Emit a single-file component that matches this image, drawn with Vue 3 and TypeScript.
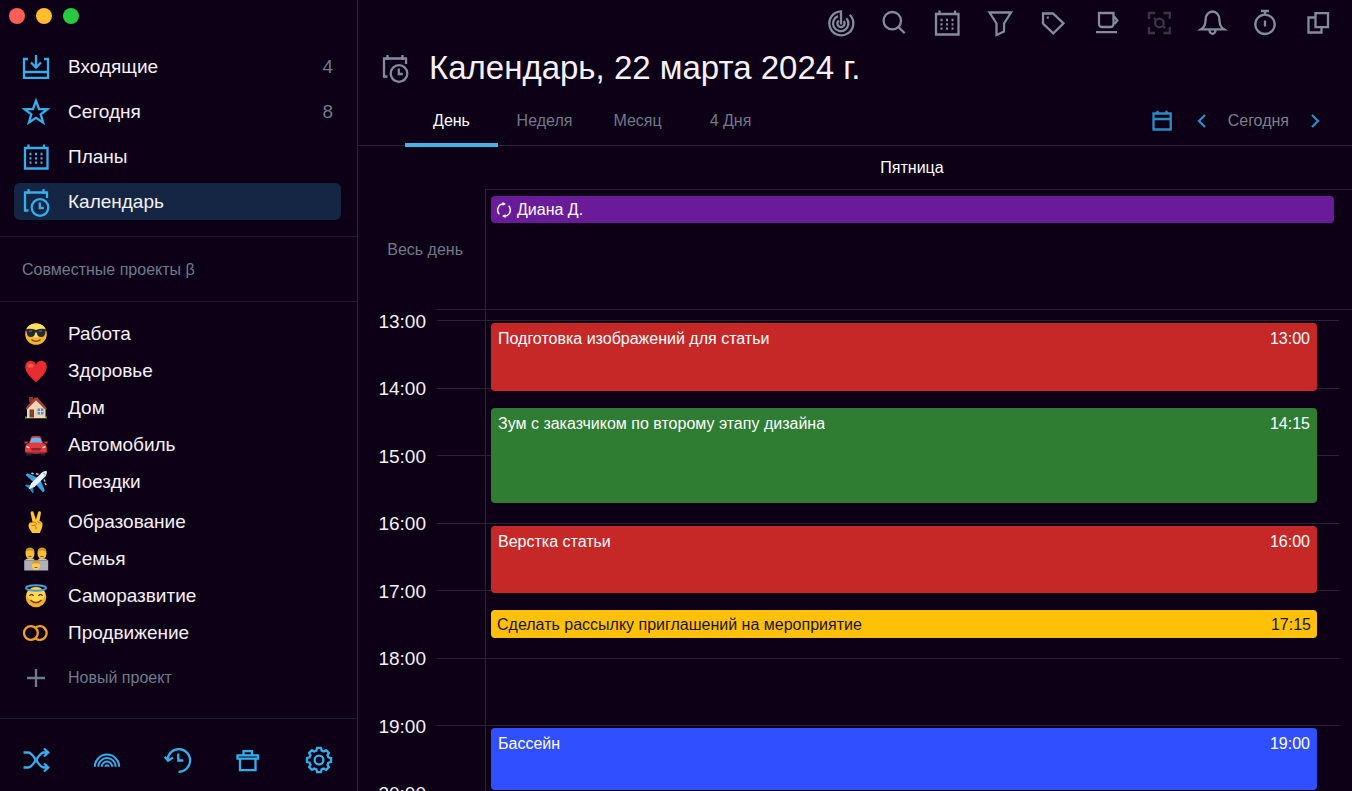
<script setup lang="ts">
import { ref } from 'vue'

interface Stroke { d: string; w?: number }
interface NavItem { id: string; label: string; icon: string; count?: number }
interface CalendarEvent { title: string; start: string; end: string; tone: string }

const gearPath = (() => {
  const points: string[] = []
  const teeth = 8
  for (let i = 0; i < teeth; i++) {
    const base = (i / teeth) * Math.PI * 2 - Math.PI / 2
    const ring: [number, number][] = [[-0.27, 9.8], [-0.16, 12.2], [0.16, 12.2], [0.27, 9.8]]
    for (const [offset, radius] of ring) {
      const x = 14 + Math.cos(base + offset) * radius
      const y = 14 + Math.sin(base + offset) * radius
      points.push(`${x.toFixed(2)} ${y.toFixed(2)}`)
    }
  }
  return `M${points.join('L')}Z`
})()

const dots = 'M7.5 11h2M13 11h2M18.5 11h2M7.5 15.3h2M13 15.3h2M18.5 15.3h2M7.5 19.6h2M13 19.6h2M18.5 19.6h2'

const icons: Record<string, Stroke[]> = {
  inbox: [{ d: 'M6 6H2v18.8h24V6h-4M2 19h24M14 2v12M9 9.5l5 5 5-5' }],
  star: [{ d: 'M14 2.8l3 8.2 8.4.2-6.7 5.2 2.4 8.1L14 19.8l-7.1 4.7 2.4-8.1-6.7-5.2L11 11z' }],
  plans: [{ d: 'M3 5h22.5v20.5H3zM6.5 1.500V5M22 1.500V5' }, { d: dots }],
  calendar: [{ d: 'M6.500 22.500H3V4.500h22V10M6.500 1v5M21.500 1v5M26.300 19.500a8.300 8.300 0 1 1-16.600 0a8.300 8.300 0 1 1 16.600 0M17.800 14.500v5.500h4' }],
  target: [{ d: 'M22.800 5.800A12 12 0 1 1 14 2.300V14M19.400 9.200A7.700 7.700 0 1 1 11 7.200M16.600 12A3.600 3.600 0 1 1 11.800 11.600M14 13v2.500' }],
  search: [{ d: 'M21 11.700a8.700 8.700 0 1 1-17.400 0a8.700 8.700 0 1 1 17.400 0M18.500 18l6.200 6.200' }],
  filter: [{ d: 'M3.500 3.500H25L18 14.500v8L10.500 26V14.500z' }],
  tag: [{ d: 'M4 4.500h10l10.500 9.800L14.300 24.300 4 14.500zM7.800 8.700h2' }],
  cup: [{ d: 'M7 4h14.500v11a3 3 0 0 1-3 3H10a3 3 0 0 1-3-3zM21.500 8.500h1.500l2.300 3-2.800 3.500M4 23.200h21' }],
  focus: [{ d: 'M4 10V4h6M18.500 4h6.300v6M24.800 18v6h-6.300M10 24H4v-6M18.700 14a4.300 4.300 0 1 1-8.600 0a4.300 4.300 0 1 1 8.600 0M9 9l2 2M18 17l2 2' }],
  bell: [{ d: 'M3 20.300h23c-4.200-2.600-4.300-6-4.700-10.300a6.800 7.500 0 0 0-13.600 0c-.400 4.300-.5 7.700-4.700 10.300zM11.500 20.300v1a3 3.500 0 0 0 6 0v-1' }],
  timer: [{ d: 'M23.700 15.300a9.700 9.700 0 1 1-19.400 0a9.700 9.700 0 1 1 19.400 0M10 2h8M14 2v4M14 11.500v6' }],
  windows: [{ d: 'M11.500 4.200h12.500v14H11.500zM11.500 8.500H4.500v15h13v-5' }],
  shuffle: [{ d: 'M1.500 6.500H6c3.500 0 5 3.500 8 7.500s4.500 7.500 8 7.500h4M1.500 21.500H6c3.500 0 5-3.500 8-7.500s4.500-7.500 8-7.500h4M22 2.500l4.300 4-4.300 4M22 17.500l4.300 4-4.300 4' }],
  rainbow: [{ d: 'M1.800 20.800a12.200 12.200 0 0 1 24.400 0M5.300 20.800a8.700 8.700 0 0 1 17.400 0M8.800 20.800a5.200 5.200 0 0 1 10.400 0M12.500 20.800a1.500 1.500 0 0 1 3 0', w: 2 }],
  history: [{ d: 'M3.500 14A11.300 11.300 0 1 1 14.500 25.800M.8 10.800l3.200 4 5-3.200M14.300 7.500v7h5' }],
  trash: [{ d: 'M3.500 9.300h20.500v3.400H3.500zM9.500 9.300V5.200h8.500v4.100M6 12.700h15.500v11.500H6z' }],
  gear: [{ d: gearPath }, { d: 'M18.400 14a4.400 4.400 0 1 1-8.800 0a4.400 4.400 0 1 1 8.800 0' }],
  rings: [{ d: 'M15.800 14a6.900 6.900 0 1 1-13.800 0a6.900 6.900 0 1 1 13.800 0M13.700 8.400A6.900 6.900 0 1 1 13.700 19.600' }],
  plus: [{ d: 'M14 5v18M5 14h18' }],
  date: [{ d: 'M5.500 6.500h17.200v16H5.500zM5.500 12h17.200M9.500 6V3.700M18.500 6V3.700' }],
  prev: [{ d: 'M17 8l-6 6 6 6' }],
  next: [{ d: 'M11 8l6 6-6 6' }],
}

const nav: NavItem[] = [
  { id: 'inbox', label: 'Входящие', icon: 'inbox', count: 4 },
  { id: 'today', label: 'Сегодня', icon: 'star', count: 8 },
  { id: 'plans', label: 'Планы', icon: 'plans' },
  { id: 'calendar', label: 'Календарь', icon: 'calendar' },
]

const projectGroups: { label: string; art: string }[][] = [
  [
    { label: 'Работа', art: 'cool' },
    { label: 'Здоровье', art: 'heart' },
    { label: 'Дом', art: 'house' },
    { label: 'Автомобиль', art: 'car' },
    { label: 'Поездки', art: 'plane' },
  ],
  [
    { label: 'Образование', art: 'victory' },
    { label: 'Семья', art: 'family' },
    { label: 'Саморазвитие', art: 'angel' },
    { label: 'Продвижение', art: 'rings' },
  ],
]

const footer = [
  { icon: 'shuffle', label: 'Перемешать' },
  { icon: 'rainbow', label: 'Темы' },
  { icon: 'history', label: 'История' },
  { icon: 'trash', label: 'Корзина' },
  { icon: 'gear', label: 'Настройки' },
]

const tools = [
  { icon: 'target', label: 'Цели' },
  { icon: 'search', label: 'Поиск' },
  { icon: 'plans', label: 'Планы' },
  { icon: 'filter', label: 'Фильтр' },
  { icon: 'tag', label: 'Метки' },
  { icon: 'cup', label: 'Перерыв' },
  { icon: 'focus', label: 'Фокус' },
  { icon: 'bell', label: 'Уведомления' },
  { icon: 'timer', label: 'Таймер' },
  { icon: 'windows', label: 'Окна' },
]

const tabs = ['День', 'Неделя', 'Месяц', '4 Дня']
const activeTab = ref('День')
const activeNav = ref('calendar')

const hours = ['13:00', '14:00', '15:00', '16:00', '17:00', '18:00', '19:00', '20:00']

const events: CalendarEvent[] = [
  { title: 'Подготовка изображений для статьи', start: '13:00', end: '14:00', tone: 'red' },
  { title: 'Зум с заказчиком по второму этапу дизайна', start: '14:15', end: '15:40', tone: 'green' },
  { title: 'Верстка статьи', start: '16:00', end: '17:00', tone: 'red' },
  { title: 'Сделать рассылку приглашений на мероприятие', start: '17:15', end: '17:40', tone: 'yellow' },
  { title: 'Бассейн', start: '19:00', end: '19:55', tone: 'blue' },
]

// The time grid starts at 12:50 and has one row for every five minutes.
const GRID_START = 12 * 60 + 50
function row(time: string): number {
  const [h, m] = time.split(':').map(Number)
  return (h * 60 + m - GRID_START) / 5 + 1
}
</script>

<template>
  <div class="app">
    <aside class="sidebar">
      <div class="lights">
        <button class="light close" aria-label="Закрыть"></button>
        <button class="light minimize" aria-label="Свернуть"></button>
        <button class="light expand" aria-label="Развернуть"></button>
      </div>

      <nav class="nav">
        <button
          v-for="item in nav"
          :key="item.id"
          class="nav-item"
          :class="{ active: activeNav === item.id }"
          @click="activeNav = item.id"
        >
          <svg class="icon" viewBox="0 0 28 28" aria-hidden="true">
            <path v-for="(s, i) in icons[item.icon]" :key="i" :d="s.d" />
          </svg>
          <span class="nav-label">{{ item.label }}</span>
          <span v-if="item.count" class="count">{{ item.count }}</span>
        </button>
      </nav>

      <h2 class="shared">Совместные проекты β</h2>

      <div class="projects">
        <ul v-for="(group, g) in projectGroups" :key="g" class="group">
          <li v-for="p in group" :key="p.label">
            <button class="project">
              <svg v-if="p.art === 'rings'" class="icon orange" viewBox="0 0 28 28" aria-hidden="true">
                <path :d="icons.rings[0].d" />
              </svg>
              <svg v-else class="emoji" viewBox="0 0 28 28" aria-hidden="true">
                <g v-if="p.art === 'cool'">
                  <circle cx="14" cy="14" r="10.800" fill="#f6b52b" />
                  <ellipse cx="14" cy="10.500" rx="9.500" ry="7" fill="#ffe05a" />
                  <path d="M3.500 9.500c3-1 7-.8 10.500.5 3.500-1.300 7.500-1.500 10.500-.5l-1 2c-.5 4.500-2 5.500-4.500 5.500-2.800 0-3.800-1.500-4.300-4.500h-1.400c-.5 3-1.500 4.500-4.300 4.500-2.500 0-4-1-4.500-5.500z" fill="#222a30" />
                  <path d="M7 11.200l3 0M17 11.200l3 0" stroke="#66757d" />
                  <path d="M9.500 19.500c2.500 2.500 6.500 2.500 9 0" stroke="#7a4312" stroke-width="1.400" fill="none" />
                </g>
                <g v-else-if="p.art === 'heart'">
                  <path d="M14 25.300C10 21.500 3.300 16 3.300 10c0-7 8-8.500 10.700-2.500C16.700 1.500 24.700 3 24.700 10c0 6-6.700 11.500-10.700 15.300z" fill="#e92c2f" />
                  <ellipse cx="8.700" cy="8.800" rx="3" ry="2" fill="#f8564f" />
                </g>
                <g v-else-if="p.art === 'house'">
                  <path d="M3 22.500h22v2H3z" fill="#5e8b3b" />
                  <path d="M5 13l8.500-8 10 9v10H5z" fill="#f1d3b5" />
                  <path d="M7 3h4v5H7z" fill="#7b3831" />
                  <path d="M3.300 14.500L12.500 3.500h3L25 14.500l-2 .8-9-9-8.800 9z" fill="#a63d35" />
                  <path d="M7.500 15.500h4.500v8H7.500z" fill="#76462f" />
                  <path d="M15.500 14.500h6v6h-6z" fill="#568bb5" />
                  <path d="M18.500 14.500v6M15.500 17.500h6" stroke="#c7dae5" />
                </g>
                <g v-else-if="p.art === 'car'">
                  <path d="M4.500 21h4.500v3.500H4.500zM19 21h4.500v3.500H19z" fill="#20252c" />
                  <path d="M7 12L9 6.500c.3-1 1-1.500 2-1.500h6c1 0 1.700.5 2 1.500l2 5.500z" fill="#cf343a" />
                  <path d="M7.800 12.500L9.700 7c3-.8 5.600-.8 8.600 0l1.900 5.500z" fill="#68b7ec" />
                  <path d="M5 13c3-2 15-2 18 0 1.700 1 2 3.500 1.800 8.500-7 1.500-14.600 1.500-21.600 0C3 16.500 3.300 14 5 13z" fill="#e33b3f" />
                  <path d="M2.500 11.500h3M22.500 11.500h3" stroke="#d63a3e" stroke-width="2" />
                  <path d="M8.500 17h11l-1.500 2.500h-8z" fill="#8c2430" />
                  <path d="M4.500 15.800l3 .8M23.500 15.800l-3 .8" stroke="#fff0c4" stroke-width="1.500" />
                  <path d="M5 21.500h18" stroke="#a52a35" stroke-width="1.500" />
                </g>
                <g v-else-if="p.art === 'plane'">
                  <path d="M16 10L5.500 5.200 3.500 7l8 7zM18.500 12l4.300 10.500-1.800 2-7-8z" fill="#3ca1df" />
                  <path d="M8 17l-4-.5-1 1.200 4.500 3 3 4.500 1.200-1-.5-4z" fill="#2488ca" />
                  <path d="M24.800 3.200c-2-.5-4.300.5-6 2.300L9 15.500 6.500 21.500l6-2.500L22.500 9.200c1.800-1.700 2.800-4 2.300-6z" fill="#e8eef3" />
                  <path d="M9.500 5l2 1M14 5.500l2.500 1M24 17l-1-2M23 13.500l-1-2" stroke="#b9d5e6" stroke-width="1.500" />
                  <path d="M21.500 5l1.800 1.800" stroke="#53748b" />
                </g>
                <g v-else-if="p.art === 'victory'">
                  <path d="M10.500 14L8.700 5.500c-.5-2.300 2.300-3 3-.8L14 11.500l2-7c.6-2.200 3.300-1.500 2.900.8L17.500 13c2.300.5 3.300 2 3 4-.3 4-1.800 5-2.500 8H10c-.5-2-3.500-4-3.500-7.500 0-2.300 1.500-3.500 4-3.500z" fill="#fbc43f" />
                  <path d="M8 15c3-1.500 6-1 6.500.5.500 2-3.500 2-5 2M12.500 17.500c1.500 1 1.700 2 1.500 3.500M15.500 13.500l3 2" stroke="#b87514" fill="none" />
                </g>
                <g v-else-if="p.art === 'family'">
                  <path d="M2.200 15.500h24v10h-24z" fill="#aeb0b7" />
                  <path d="M2.200 15.500l3-2h6l3 3 3-3h6l3 2z" fill="#c6c8ce" />
                  <ellipse cx="8" cy="8.500" rx="4.500" ry="5.500" fill="#f4bd3c" />
                  <ellipse cx="20" cy="8.500" rx="4.500" ry="5.500" fill="#f4bd3c" />
                  <path d="M3.500 7c0-6 9-6 9 0-3-2-6-2-9 0zM15.500 7c0-6 9-6 9 0-3-2-6-2-9 0z" fill="#d99622" />
                  <path d="M6.500 11.500h3M18.500 11.500h3" stroke="#8a5717" />
                  <ellipse cx="14" cy="20.500" rx="4" ry="4.500" fill="#ffcb50" />
                  <path d="M10 19c0-4.500 8-4.500 8 0-2.500-1-5.500-1-8 0z" fill="#d99622" />
                  <path d="M12.500 22.500h3" stroke="#8a5717" />
                </g>
                <g v-else>
                  <circle cx="14" cy="15" r="10.300" fill="#f5ae2b" />
                  <ellipse cx="14" cy="12.500" rx="9" ry="7" fill="#ffd953" />
                  <ellipse cx="14" cy="6" rx="10" ry="2.700" fill="none" stroke="#4b9fd4" stroke-width="2" />
                  <path d="M7.500 14c1-2 3-2 4 0M16.500 14c1-2 3-2 4 0M8.500 18c3 3.500 8 3.500 11 0" stroke="#704010" stroke-width="1.400" fill="none" />
                </g>
              </svg>
              <span>{{ p.label }}</span>
            </button>
          </li>
        </ul>
        <button class="project new">
          <svg class="icon muted" viewBox="0 0 28 28" aria-hidden="true"><path :d="icons.plus[0].d" /></svg>
          <span>Новый проект</span>
        </button>
      </div>

      <footer class="footer">
        <button v-for="f in footer" :key="f.icon" class="icon-button" :aria-label="f.label">
          <svg class="icon" viewBox="0 0 28 28" aria-hidden="true">
            <path v-for="(s, i) in icons[f.icon]" :key="i" :d="s.d" :stroke-width="s.w" />
          </svg>
        </button>
      </footer>
    </aside>

    <main class="main">
      <div class="toolbar">
        <button v-for="t in tools" :key="t.icon" class="icon-button" :aria-label="t.label" :disabled="t.icon === 'focus'">
          <svg class="icon grey" :class="{ dim: t.icon === 'focus' }" viewBox="0 0 28 28" aria-hidden="true">
            <path v-for="(s, i) in icons[t.icon]" :key="i" :d="s.d" />
          </svg>
        </button>
      </div>

      <header class="heading">
        <svg class="icon grey" viewBox="0 0 28 28" aria-hidden="true"><path :d="icons.calendar[0].d" /></svg>
        <h1>Календарь, 22 марта 2024 г.</h1>
      </header>

      <div class="bar">
        <div class="tabs" role="tablist">
          <button
            v-for="tab in tabs"
            :key="tab"
            class="tab"
            role="tab"
            :aria-selected="activeTab === tab"
            :class="{ active: activeTab === tab }"
            @click="activeTab = tab"
          >{{ tab }}</button>
        </div>
        <div class="pager">
          <button class="icon-button" aria-label="Выбрать дату">
            <svg class="icon blue" viewBox="0 0 28 28" aria-hidden="true"><path :d="icons.date[0].d" /></svg>
          </button>
          <button class="icon-button step" aria-label="Назад">
            <svg class="icon blue" viewBox="0 0 28 28" aria-hidden="true"><path :d="icons.prev[0].d" /></svg>
          </button>
          <button class="today">Сегодня</button>
          <button class="icon-button step" aria-label="Вперёд">
            <svg class="icon blue" viewBox="0 0 28 28" aria-hidden="true"><path :d="icons.next[0].d" /></svg>
          </button>
        </div>
      </div>

      <div class="day-head"><span>Пятница</span></div>

      <section class="all-day">
        <span class="all-day-label">Весь день</span>
        <div class="all-day-list">
          <div class="all-day-event">
            <svg class="repeat" viewBox="0 0 16 16" aria-hidden="true">
              <path d="M3.300 12.300A6.300 6.300 0 0 1 7.500 1.800M12.700 3.700A6.300 6.300 0 0 1 8.500 14.200" />
              <path class="tip" d="M6.500 0l3.500 1.900-3.500 1.900zM9.500 16L6 14.100l3.500-1.900z" />
            </svg>
            <span>Диана Д.</span>
          </div>
        </div>
      </section>

      <section class="timeline">
        <div class="time-grid">
          <div class="column-line"></div>
          <template v-for="h in hours" :key="h">
            <time class="hour" :style="{ gridRow: `${row(h) - 2} / span 4` }">{{ h }}</time>
            <div class="hour-line" :style="{ gridRow: `${row(h)} / span 1` }"></div>
          </template>
          <article
            v-for="e in events"
            :key="e.title"
            class="event"
            :class="e.tone"
            :style="{ gridRow: `${row(e.start)} / ${row(e.end)}` }"
          >
            <span class="event-title">{{ e.title }}</span>
            <time>{{ e.start }}</time>
          </article>
        </div>
      </section>
    </main>
  </div>
</template>

<style>
body {
  background: #0d0016;
}
</style>

<style scoped>
.app {
  display: grid;
  grid-template-columns: 358px 1fr;
  height: 100vh;
  overflow: hidden;
  box-sizing: border-box;
  background: #0d0016;
  color: #f6f0f8;
  font-family: "Liberation Sans", Arial, sans-serif;
  font-size: 16px;
  line-height: 20px;
}
.app *,
.app *::before {
  box-sizing: border-box;
}
button {
  margin: 0;
  padding: 0;
  border: 0;
  background: none;
  color: inherit;
  font: inherit;
  text-align: left;
}
h1,
h2,
ul {
  margin: 0;
  padding: 0;
  font-weight: 400;
  list-style: none;
}
.icon,
.emoji {
  display: block;
  flex: none;
  width: 28px;
  height: 28px;
  overflow: visible;
}
.icon {
  fill: none;
  stroke: #35aeec;
  stroke-width: 2.3;
}
.icon.grey {
  stroke: #858b9d;
}
.icon.dim {
  stroke: #3b3442;
}
.icon.muted {
  stroke: #6f7b8b;
}
.icon.orange {
  stroke: #f2a02c;
}
.icon.blue {
  stroke: #2b8cc4;
}

.sidebar {
  display: flex;
  flex-direction: column;
  min-height: 0;
  border-right: 1px solid #2a2135;
}
.lights {
  display: flex;
  flex: none;
  gap: 11px;
  height: 48px;
  padding: 8px 9px;
}
.light {
  width: 16px;
  height: 16px;
  border-radius: 50%;
}
.close {
  background: #ff5f57;
}
.minimize {
  background: #febc2e;
}
.expand {
  background: #28c840;
}
.nav {
  display: grid;
  gap: 8px;
  padding: 0 16px 16px 14px;
  border-bottom: 1px solid #211a2c;
}
.nav-item {
  display: flex;
  align-items: center;
  gap: 18px;
  height: 37px;
  padding: 0 8px;
  border-radius: 6px;
  font-size: 19px;
}
.nav-item.active {
  background: #142644;
}
.nav-label {
  flex: 1;
}
.count {
  color: #727888;
}
.shared {
  padding: 23px 22px 21px;
  border-bottom: 1px solid #211a2c;
  color: #6f7b8b;
  font-size: 16px;
  line-height: 20px;
}
.projects {
  display: flex;
  flex: 1;
  flex-direction: column;
  gap: 3px;
  padding: 13px 22px 0;
}
.project {
  display: flex;
  align-items: center;
  gap: 18px;
  width: 100%;
  height: 37px;
  font-size: 19px;
}
.project.new {
  height: 48px;
  color: #6f7b8b;
  font-size: 16px;
}
.footer {
  display: flex;
  justify-content: space-between;
  padding: 27px 24px 17px 22px;
  border-top: 1px solid #211a2c;
}

.main {
  display: flex;
  flex-direction: column;
  min-width: 0;
  min-height: 0;
}
.toolbar {
  display: flex;
  flex: none;
  align-items: center;
  justify-content: flex-end;
  gap: 25px;
  height: 45px;
  padding: 0 20px;
}
.heading {
  display: flex;
  flex: none;
  align-items: center;
  gap: 20px;
  height: 46px;
  padding-left: 23px;
}
h1 {
  font-size: 33px;
  line-height: 40px;
}
.bar {
  display: flex;
  flex: none;
  justify-content: space-between;
  height: 55px;
  padding: 5px 23px 0 47px;
  border-bottom: 1px solid #2a2135;
}
.tabs {
  display: grid;
  grid-auto-columns: 93px;
  grid-auto-flow: column;
  margin-bottom: -2px;
}
.tab {
  padding-top: 2px;
  border-bottom: 4px solid transparent;
  color: #727888;
  text-align: center;
}
.tab.active {
  border-color: #46b2e8;
  color: #fff;
}
.pager {
  display: flex;
  align-items: center;
}
.step {
  margin: 0 12px;
}
.step:last-child {
  margin-right: 0;
}
.today {
  color: #7f7d8d;
}

.day-head {
  display: flex;
  flex: none;
  height: 43px;
  padding: 0 13px 0 127px;
  color: #fff;
}
.day-head span {
  flex: 1;
  align-self: center;
  text-align: center;
}
.all-day {
  display: grid;
  flex: none;
  grid-template-columns: 127px 1fr;
  height: 120px;
}
.all-day-label {
  align-self: center;
  padding: 2px 22px 0 0;
  color: #727888;
  text-align: right;
}
.all-day-list {
  padding: 6px 18px 0 5px;
  border-top: 1px solid #2a2135;
  border-left: 1px solid #2a2135;
}
.all-day-event {
  display: flex;
  align-items: center;
  gap: 5px;
  height: 27px;
  padding: 0 5px;
  border-radius: 4px;
  background: #6a1b9a;
  color: #fff;
}
.repeat {
  width: 16px;
  height: 16px;
  fill: none;
  stroke: #fff;
  stroke-width: 1.5;
}
.repeat .tip {
  fill: #fff;
  stroke: none;
}
.timeline {
  flex: 1;
  min-height: 0;
  overflow: hidden;
}
.time-grid {
  display: grid;
  grid-template-columns: 79px 48px 1fr 13px;
  grid-template-rows: repeat(96, minmax(0, 1fr));
  height: 540px;
}
.time-grid::before {
  content: "";
  grid-row: 1;
  grid-column: 2 / -1;
  border-top: 1px solid #2a2135;
}
.column-line {
  grid-row: 1 / -1;
  grid-column: 3;
  border-left: 1px solid #2a2135;
}
.hour {
  grid-column: 1;
  align-self: center;
  padding: 3px 11px 0 0;
  font-size: 19px;
  text-align: right;
}
.hour-line {
  grid-column: 2 / 4;
  border-top: 1px solid #2a2135;
}
.event {
  display: flex;
  grid-column: 3;
  align-items: flex-start;
  justify-content: space-between;
  margin: 3px 22px -3px 6px;
  padding: 6px 7px 0;
  border-radius: 4px;
  color: #fff;
}
.event-title {
  overflow: hidden;
  text-overflow: ellipsis;
  white-space: nowrap;
}
.red {
  background: #c62828;
}
.green {
  background: #2e7d32;
}
.yellow {
  padding: 5px 6px 0;
  background: #ffc107;
  color: #1a1408;
}
.blue.event {
  background: #304ffe;
}
</style>
